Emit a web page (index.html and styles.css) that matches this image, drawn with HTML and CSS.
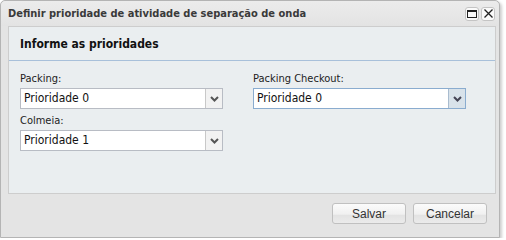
FILE: index.html
```html
<!DOCTYPE html>
<html lang="pt">

<head>
    <meta charset="UTF-8">
    <title>Definir prioridade</title>
    <link rel="stylesheet" href="styles.css">
</head>

<body>
    <div class="window">
        <div class="titlebar">
            <span class="title">Definir prioridade de atividade de separação de onda</span>
            <div class="tools">
                <span class="tool">
                    <svg width="10" height="8" viewBox="0 0 10 8"><rect x="0.5" y="0.5" width="9" height="7" fill="none" stroke="#222" /><rect x="0" y="0" width="10" height="2" fill="#222" /></svg>
                </span>
                <span class="tool">
                    <svg width="9" height="9" viewBox="0 0 9 9"><path d="M0.5 0.5L8.5 8.5M8.5 0.5L0.5 8.5" stroke="#222" stroke-width="1.3" /></svg>
                </span>
            </div>
        </div>
        <div class="content">
            <div class="panel">
                <div class="panel-header">Informe as prioridades</div>
                <div class="form">
                    <div class="col">
                        <label>Packing:</label>
                        <div class="combo">
                            <span class="value">Prioridade 0</span>
                            <span class="trigger"><svg width="9" height="6" viewBox="0 0 9 6"><path d="M1 1L4.5 4.5L8 1" fill="none" stroke="#555" stroke-width="2" /></svg></span>
                        </div>
                        <label>Colmeia:</label>
                        <div class="combo">
                            <span class="value">Prioridade 1</span>
                            <span class="trigger"><svg width="9" height="6" viewBox="0 0 9 6"><path d="M1 1L4.5 4.5L8 1" fill="none" stroke="#555" stroke-width="2" /></svg></span>
                        </div>
                    </div>
                    <div class="col">
                        <label>Packing Checkout:</label>
                        <div class="combo focus">
                            <span class="value">Prioridade 0</span>
                            <span class="trigger"><svg width="9" height="6" viewBox="0 0 9 6"><path d="M1 1L4.5 4.5L8 1" fill="none" stroke="#445" stroke-width="2" /></svg></span>
                        </div>
                    </div>
                </div>
            </div>
            <div class="footer">
                <button>Salvar</button>
                <button>Cancelar</button>
            </div>
        </div>
    </div>
</body>

</html>
```

FILE: styles.css
```css
* {
    box-sizing: border-box;
    margin: 0;
    padding: 0;
}

body {
    background: #ffffff;
    font-family: "DejaVu Sans Condensed", "DejaVu Sans", sans-serif;
}

.window {
    width: 500px;
    height: 238px;
    border: 1px solid #b4b4b4;
    border-radius: 5px 5px 0 0;
    background: #e4e4e4;
    box-shadow: 2px 2px 3px #cfcfcf;
    display: flex;
    flex-direction: column;
}

.titlebar {
    height: 25px;
    display: flex;
    align-items: center;
    padding: 0 4px 0 7px;
    background: linear-gradient(#ececec, #e3e3e3);
    border-radius: 5px 5px 0 0;
}

.title {
    flex: 1;
    font-size: 11px;
    font-weight: bold;
    color: #3a3a3a;
}

.tools {
    display: flex;
    gap: 2px;
}

.tool {
    width: 14px;
    height: 14px;
    border: 1px solid #c4c4c4;
    border-radius: 3px;
    background: #fafafa;
    display: flex;
    align-items: center;
    justify-content: center;
}

.content {
    flex: 1;
    padding: 0 3px 0 7px;
    display: flex;
    flex-direction: column;
}

.panel {
    height: 168px;
    border: 1px solid #cdcdcd;
    background: #eaeef0;
}

.panel-header {
    height: 34px;
    border-bottom: 1px solid #a8c0da;
    padding: 0 11px;
    display: flex;
    align-items: center;
    font-size: 12px;
    font-weight: bold;
    color: #111;
}

.form {
    display: flex;
    gap: 30px;
    padding: 10px 11px;
}

.col {
    width: 203px;
    display: flex;
    flex-direction: column;
}

.col:last-child {
    width: 213px;
}

label {
    font-size: 11px;
    color: #222;
    height: 17px;
    line-height: 15px;
}

.combo {
    height: 21px;
    display: flex;
    border: 1px solid #b8bcc4;
    background: #fff;
    margin-bottom: 4px;
}

.combo .value {
    flex: 1;
    font-size: 12px;
    line-height: 19px;
    padding-left: 3px;
    color: #111;
}

.combo .trigger {
    width: 17px;
    border-left: 1px solid #c8c8c8;
    background: #f2f2f2;
    display: flex;
    align-items: center;
    justify-content: center;
}

.combo.focus {
    border-color: #8aaccf;
}

.combo.focus .trigger {
    background: #d8e2ea;
    border-left-color: #a9bccf;
}

.footer {
    flex: 1;
    display: flex;
    justify-content: flex-end;
    align-items: center;
    gap: 7px;
    padding: 0 9px 4px 0;
}

button {
    width: 74px;
    height: 21px;
    border: 1px solid #c0c0c0;
    border-radius: 3px;
    background: linear-gradient(#fbfbfb 0%, #f0f0f0 55%, #e2e2e2 56%, #ebebeb 100%);
    font-family: "Liberation Sans", Arial, sans-serif;
    font-size: 12px;
    color: #333;
}
```
